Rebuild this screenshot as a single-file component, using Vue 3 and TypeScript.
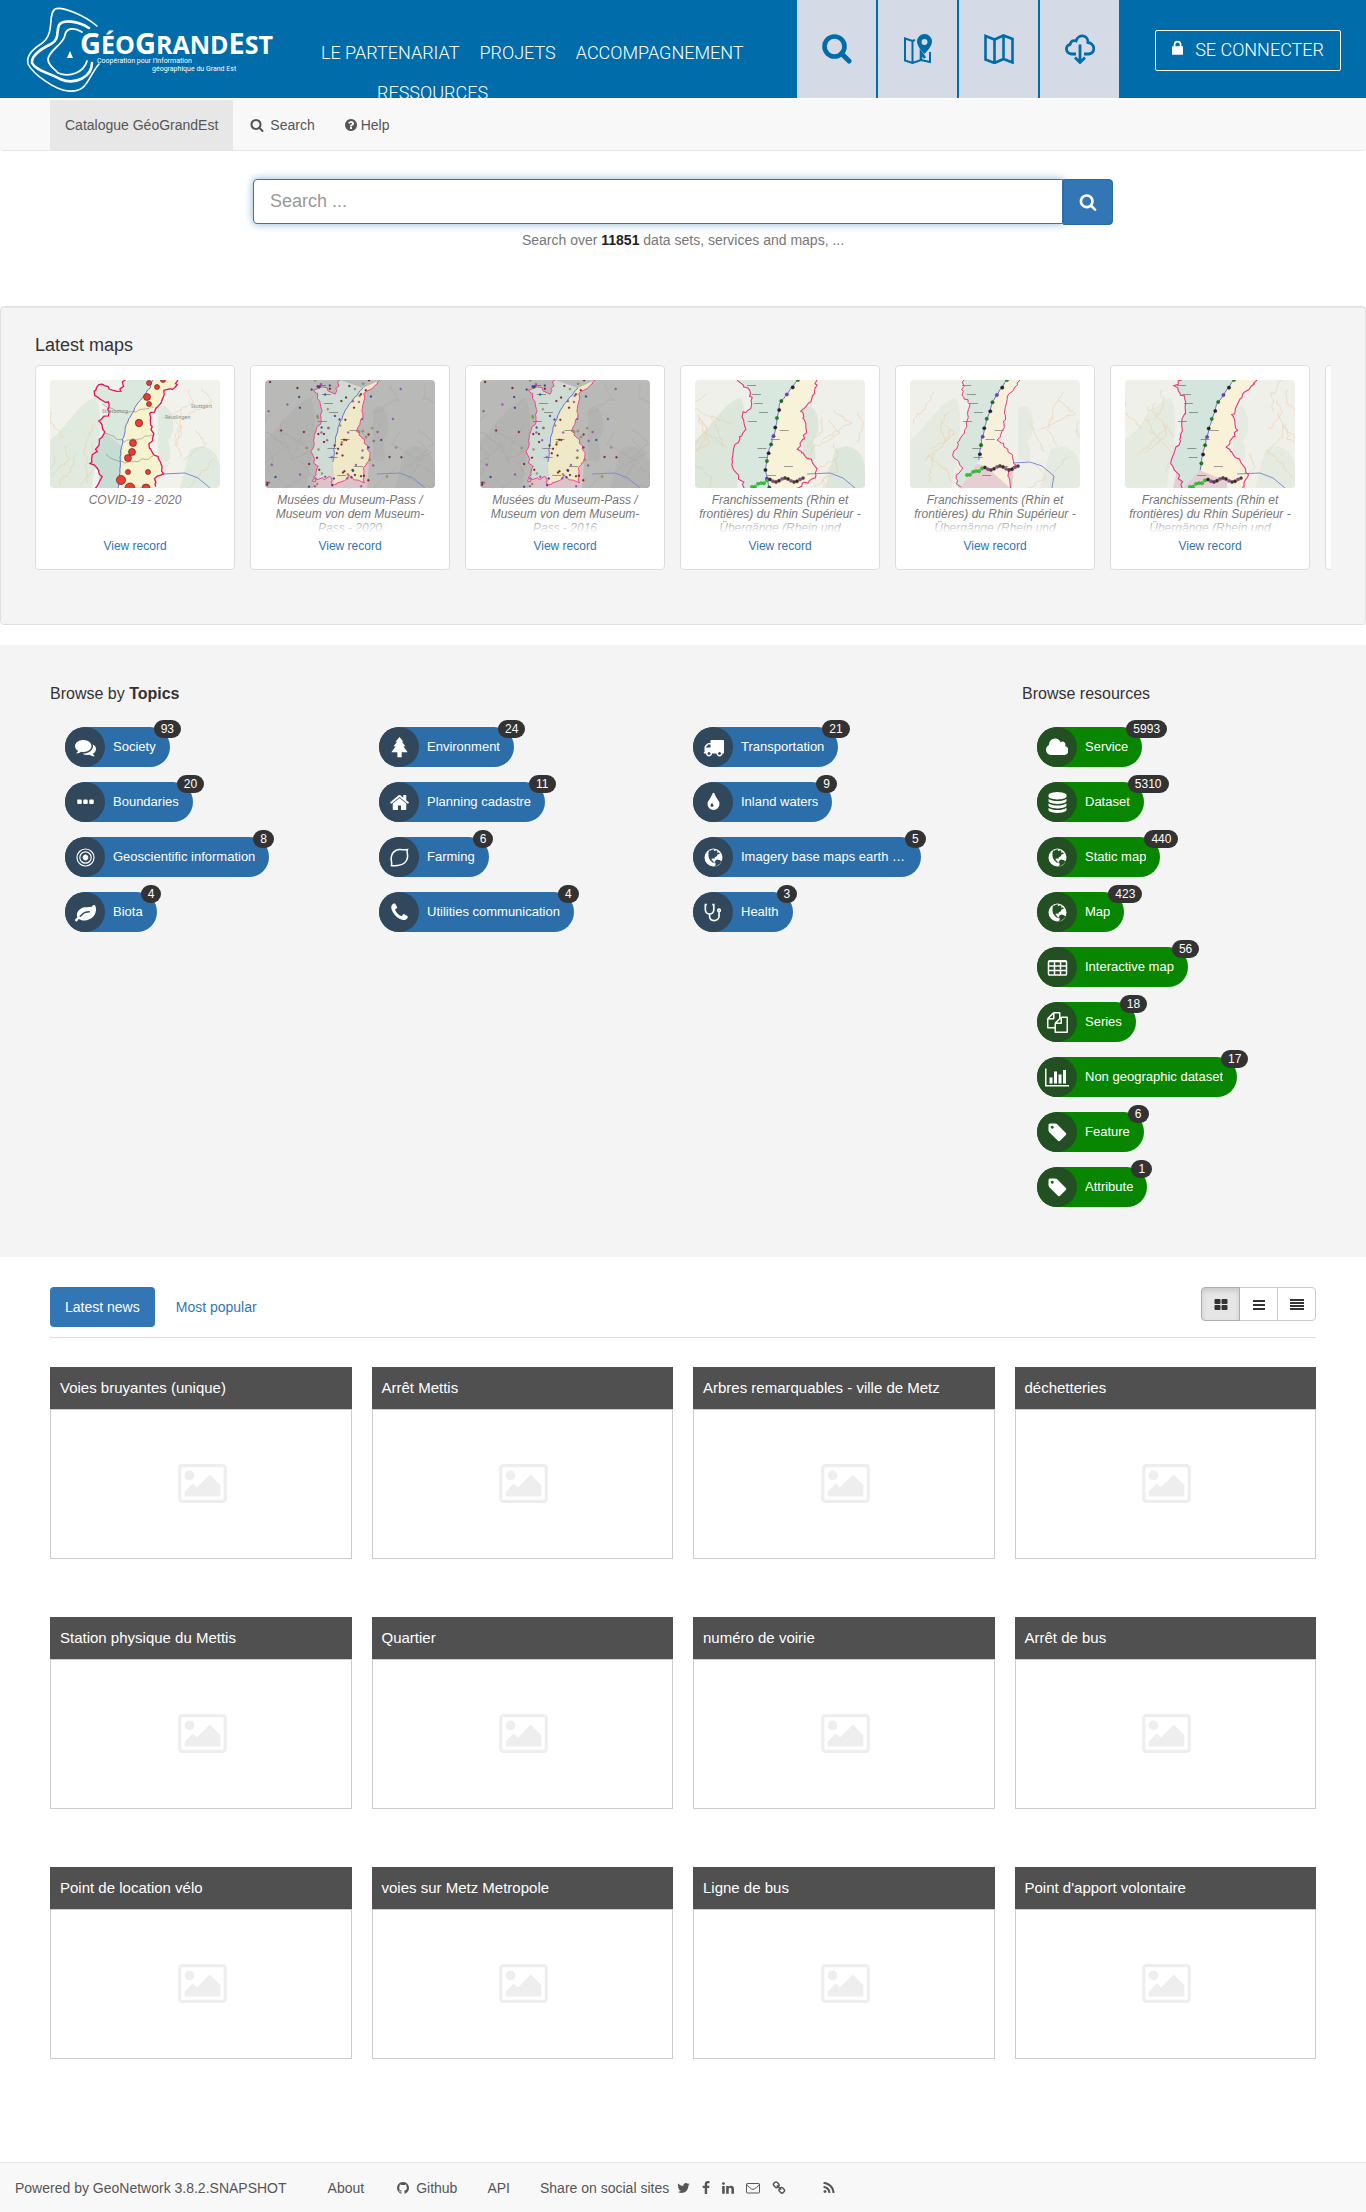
<script setup lang="ts">
import { ref } from 'vue'

interface Glyph { box: string; d: string; stroke?: number }
interface Pill { label: string; count: number; icon: string }
type Point = [number, number]
interface MapArt {
  left: Point[]
  right: Point[]
  river: Point[]
  bg: string
  land: string
  west: string
  east: string
  border: string
  bw: number
}
interface Dot { x: number; y: number; r: number; c: string }
interface MapCard { title: string; art: string }

const disc = 'M896 128a768 768 0 1 0 0 1536a768 768 0 1 0 0-1536z'
const cells = [448, 832, 1216]
  .map(y => [192, 704, 1216].map(x => `M${x} ${y}v256h384v-256z`).join(''))
  .join('')

const glyphs: Record<string, Glyph> = {
  search: { box: '0 0 1792 1792', d: 'M1216 832q0-185-131.5-316.5t-316.5-131.5-316.5 131.5-131.5 316.5 131.5 316.5 316.5 131.5 316.5-131.5 131.5-316.5zm512 832q0 52-38 90t-90 38q-54 0-90-38l-343-342q-179 124-399 124-143 0-273.5-55.5t-225-150-150-225-55.5-273.5 55.5-273.5 150-225 225-150 273.5-55.5 273.5 55.5 225 150 150 225 55.5 273.5q0 220-124 399l343 343q37 37 37 90z' },
  help: { box: '128 0 1536 1792', d: 'M1024 1376v-192q0-14-9-23t-23-9h-192q-14 0-23 9t-9 23v192q0 14 9 23t23 9h192q14 0 23-9t9-23zm256-672q0-88-55.5-163t-138.5-116-170-41q-243 0-371 213-15 24 8 42l132 100q7 6 19 6 16 0 25-12 53-68 86-92 34-24 86-24 48 0 85.5 26t37.5 59q0 38-20 61t-68 45q-63 28-115.5 86.5t-52.5 125.5v36q0 14 9 23t23 9h192q14 0 23-9t9-23q0-19 21.5-49.5t54.5-49.5q32-18 49-28.5t46-35 44.5-48 28-60.5 12.5-81zm384 192q0 209-103 385.5t-279.5 279.5-385.5 103-385.5-103-279.5-279.5-103-385.5 103-385.5 279.5-279.5 385.5-103 385.5 103 279.5 279.5 103 385.5z' },
  comments: { box: '0 0 1792 1792', d: 'M1408 768q0 139-94 257t-256.5 186.5-353.5 68.5q-86 0-176-16-124 88-278 128-36 9-86 16h-3q-11 0-20.5-8t-11.5-21q-1-3-1-6.5t.5-6.5 2-6l2.5-5 3.5-5.5 4-5 4.5-5 4-4.5q5-6 23-25t26-29.5 22.5-29 25-38.5 20.5-44q-124-72-195-177t-71-224q0-139 94-257t256.5-186.5 353.5-68.5 353.5 68.5 256.5 186.5 94 257zm384 256q0 120-71 224.5t-195 176.5q10 24 20.5 44t25 38.5 22.5 29 26 29.5 23 25q1 1 4 4.5t4.5 5 4 5 3.5 5.5l2.5 5 2 6 .5 6.5-1 6.5q-3 14-13 22t-22 7q-50-7-86-16-154-40-278-128-90 16-176 16-271 0-472-132 58 4 88 4 161 0 309-45t264-129q125-92 192-212t67-254q0-77-23-152 129 71 204 178t75 230z' },
  tree: { box: '0 0 1792 1792', d: 'M896 0L1230 400H1100L1400 790H1230L1590 1310H1080V1700Q1080 1728 1050 1728H740Q712 1728 712 1700V1310H200L560 790H390L690 400H560z' },
  dots: { box: '0 0 1792 1792', d: 'M224 640h256q96 0 96 96v192q0 96-96 96h-192q-96 0-96-96v-192q0-96 32-96zM800 640h192q96 0 96 96v192q0 96-96 96h-192q-96 0-96-96v-192q0-96 96-96zM1312 640h192q96 0 96 96v192q0 96-96 96h-192q-96 0-96-96v-192q0-96 96-96z' },
  home: { box: '0 0 1792 1792', d: 'M1472 992v480q0 26-19 45t-45 19h-384v-384h-256v384h-384q-26 0-45-19t-19-45v-480q0-1 .5-3t.5-3l575-474 575 474q1 2 1 6zm223-69l-62 74q-8 9-21 11h-3q-13 0-21-7l-692-577-692 577q-12 8-24 7-13-2-21-11l-62-74q-8-10-7-23.5t11-21.5l719-599q32-26 76-26t76 26l244 204v-195q0-14 9-23t23-9h192q14 0 23 9t9 23v408l219 182q10 8 11 21.5t-7 23.5z' },
  rings: { box: '0 0 1792 1792', stroke: 100, d: 'M896 170a726 726 0 1 0 0 1452a726 726 0 1 0 0-1452zM896 410a486 486 0 1 0 0 972a486 486 0 1 0 0-972zM896 700a196 196 0 1 0 0 392a196 196 0 1 0 0-392zM896 800a96 96 0 1 0 0 192a96 96 0 1 0 0-192zM896 860a36 36 0 1 0 0 72a36 36 0 1 0 0-72z' },
  lemon: { box: '0 0 1792 1792', stroke: 130, d: 'M1570 220C1280 290 1130 190 880 210C480 240 200 540 180 940C170 1180 290 1350 200 1580C340 1660 460 1570 740 1570C1240 1560 1560 1240 1590 820C1600 600 1500 430 1570 220z' },
  leaf: { box: '0 0 1792 1792', d: 'M1280 832q0-26-19-45t-45-19q-172 0-318 49.5t-259.5 134-235.5 219.5q-19 21-19 45 0 26 19 45t45 19q24 0 45-19 27-24 74-71t67-66q137-124 268.5-176t313.5-52q26 0 45-19t19-45zm512-198q0 95-20 193-46 224-184.5 383t-357.5 268q-214 108-438 108-148 0-286-47-15-5-88-42t-96-37q-16 0-39.5 32t-45 70-52.5 70-60 32q-43 0-63.5-17.5t-45.5-59.5q-2-4-6-11t-5.5-10-3-9.5-1.5-13.5q0-35 31-73.5t68-65.5 68-56 31-48q0-4-14-38t-16-44q-9-51-9-104 0-115 43.5-220t119-184.5 170.5-139 204-95.5q55-18 145-25.5t179.5-9 178.5-6 163.5-24 113.5-56.5l29.5-29.5 29.5-28 27-20 36.5-16 43.5-4.5q39 0 70.5 46t47.5 112 24 124 8 96z' },
  phone: { box: '0 0 1792 1792', d: 'M1600 1240q0 27-10 70.5t-21 68.5q-21 50-122 106-94 51-186 51-27 0-53-3.5t-57.5-12.5-47-14.5-55.5-20.5-49-18q-98-35-175-83-127-79-264-216t-216-264q-48-77-83-175-3-9-18-49t-20.5-55.5-14.5-47-12.5-57.5-3.5-53q0-92 51-186 56-101 106-122 25-11 68.5-21t70.5-10q14 0 21 3 18 6 53 76 11 19 30 54t35 63.5 31 53.5q3 4 17.5 25t21.5 35.5 7 28.5q0 20-28.5 50t-62 55-62 53-28.5 46q0 9 5 22.5t8.5 20.5 14 24 11.5 19q76 137 174 235t235 174q2 1 19 11.5t24 14 20.5 8.5 22.5 5q18 0 46-28.5t53-62 55-62 50-28.5q14 0 28.5 7t35.5 21.5 25 17.5q25 15 53.5 31t63.5 35 54 30q70 35 76 53 3 7 3 21z' },
  truck: { box: '0 0 1792 1792', d: 'M640 1408q0-52-38-90t-90-38-90 38-38 90 38 90 90 38 90-38 38-90zm-384-512h384v-256h-158q-13 0-22 9l-195 195q-9 9-9 22v30zm1280 512q0-52-38-90t-90-38-90 38-38 90 38 90 90 38 90-38 38-90zm256-1088v1024q0 15-4 26.5t-13.5 18.5-16.5 11.5-23.5 6-22.5 2-25.5 0-22.5-.5q0 106-75 181t-181 75-181-75-75-181h-384q0 106-75 181t-181 75-181-75-75-181h-64q-3 0-22.5.5t-25.5 0-22.5-2-23.5-6-16.5-11.5-13.5-18.5-4-26.5q0-26 19-45t45-19v-320q0-8-.5-35t0-38 2.5-34.5 6.5-37 14-30.5 22.5-30l198-198q19-19 50.5-32t58.5-13h160v-192q0-26 19-45t45-19h1024q26 0 45 19t19 45z' },
  drop: { box: '0 0 1792 1792', d: 'M896 1152q0-36-20-69-1-1-15.5-22.5t-25.5-38-25-44-21-50.5q-4-16-21-16t-21 16q-7 23-21 50.5t-25 44-25.5 38-15.5 22.5q-20 33-20 69 0 53 37.5 90.5t90.5 37.5 90.5-37.5 37.5-90.5zm512-128q0 212-150 362t-362 150-362-150-150-362q0-145 81-275 6-9 62.5-90.5t101-151 99.5-178 83-201.5q9-30 34-47t51-17 51.5 17 33.5 47q28 93 83 201.5t99.5 178 101 151 62.5 90.5q81 127 81 275z' },
  globe: { box: '0 0 1792 1792', d: disc + 'M500 290l120 20 100-80 250-30-60 110 70 30 150-60 110 70-60 130 190-30 60 120-190 70-60 140-170 100-30 130-120-30-130 20 20 130 100 40 60 130 130 60-60 30-190-90-160-150-120-190-50-260zM1090 1130l130-60 180 40 180 110-60 150-180 180-200 90-130 10 70-130-20-160-60-90z' },
  stetho: { box: '0 0 1792 1792', stroke: 140, d: 'M330 220H200V640C200 890 380 1020 560 1020S920 890 920 640V220H790M560 1020V1200C560 1450 740 1590 950 1590S1370 1450 1370 1200V820M1370 600a110 110 0 1 0 1 0z' },
  cloud: { box: '0 0 1920 1792', d: 'M1920 1152q0 159-112.5 271.5t-271.5 112.5h-1088q-185 0-316.5-131.5t-131.5-316.5q0-132 71-241.5t187-163.5q-2-28-2-43 0-212 150-362t362-150q158 0 286.5 88t187.5 230q70-62 166-62 106 0 181 75t75 181q0 75-41 138 129 30 213 134.5t84 239.5z' },
  database: { box: '0 0 1792 1792', d: 'M896 768q237 0 443-43t325-127v170q0 69-103 128t-280 93.5-385 34.5-385-34.5-280-93.5-103-128v-170q119 84 325 127t443 43zm0 768q237 0 443-43t325-127v170q0 69-103 128t-280 93.5-385 34.5-385-34.5-280-93.5-103-128v-170q119 84 325 127t443 43zm0-384q237 0 443-43t325-127v170q0 69-103 128t-280 93.5-385 34.5-385-34.5-280-93.5-103-128v-170q119 84 325 127t443 43zm0-1152q208 0 385 34.5t280 93.5 103 128v128q0 69-103 128t-280 93.5-385 34.5-385-34.5-280-93.5-103-128v-128q0-69 103-128t280-93.5 385-34.5z' },
  table: { box: '0 0 1792 1792', d: 'M224 256h1344q160 0 160 160v1024q0 160-160 160h-1344q-160 0-160-160v-1024q0-160 160-160z' + cells },
  files: { box: '0 0 1792 1792', d: 'M1696 384q40 0 68 28t28 68v1216q0 40-28 68t-68 28h-960q-40 0-68-28t-28-68v-288h-544q-40 0-68-28t-28-68v-672q0-40 20-88t48-76l408-408q28-28 76-48t88-20h416q40 0 68 28t28 68v328q68-40 128-40h416zm-544 213l-299 299h299v-299zm-640-384l-299 299h299v-299zm196 647l316-316v-416h-384v416q0 40-28 68t-68 28h-416v640h512v-256q0-40 20-88t48-76zm956 804v-1152h-384v416q0 40-28 68t-68 28h-416v640h896z' },
  chart: { box: '0 0 2048 1792', d: 'M640 896v512h-256v-512h256zm384-512v1024h-256v-1024h256zm1024 1152v128h-2048v-1536h128v1408h1920zm-640-896v768h-256v-768h256zm384-384v1152h-256v-1152h256z' },
  tag: { box: '0 0 1792 1792', d: 'M576 448q0-53-37.5-90.5t-90.5-37.5-90.5 37.5-37.5 90.5 37.5 90.5 90.5 37.5 90.5-37.5 37.5-90.5zm1067 576q0 53-37 90l-491 492q-39 37-91 37-53 0-90-37l-715-716q-38-37-64.5-101t-26.5-117v-416q0-52 38-90t90-38h416q53 0 117 26.5t102 64.5l715 714q37 39 37 91z' },
  picture: { box: '0 128 1920 1536', d: 'M640 576q0 80-56 136t-136 56-136-56-56-136 56-136 136-56 136 56 56 136zm1024 384v448h-1408v-192l320-320 160 160 512-512zm96-704h-1600q-13 0-22.5 9.5t-9.5 22.5v1216q0 13 9.5 22.5t22.5 9.5h1600q13 0 22.5-9.5t9.5-22.5v-1216q0-13-9.5-22.5t-22.5-9.5zm160 32v1216q0 66-47 113t-113 47h-1600q-66 0-113-47t-47-113v-1216q0-66 47-113t113-47h1600q66 0 113 47t47 113z' },
  github: { box: '128 0 1536 1792', d: 'M896 128q209 0 385.5 103t279.5 279.5 103 385.5q0 251-146.5 451.5t-378.5 277.5q-27 5-40-7t-13-30q0-3 .5-76.5t.5-134.5q0-97-52-142 57-6 102.5-18t94-39 81-66.5 53-105 20.5-150.5q0-119-79-206 37-91-8-204-28-9-81 11t-92 44l-38 24q-93-26-192-26t-192 26q-16-11-42.5-27t-83.5-38.5-85-13.5q-45 113-8 204-79 87-79 206 0 85 20.5 150t52.5 105 80.5 67 94 39 102.5 18q-39 36-49 103-21 10-45 15t-57 5-65.5-21.5-55.5-62.5q-19-32-48.5-52t-49.5-24l-20-3q-21 0-29 4.5t-5 11.5 9 14 13 12l7 5q22 10 43.5 38t31.5 51l10 23q13 38 44 61.5t67 30 69.5 7 55.5-3.5l23-4q0 38 .5 88.5t.5 54.5q0 18-13 30t-40 7q-232-77-378.5-277.5t-146.5-451.5q0-209 103-385.5t279.5-279.5 385.5-103z' },
  twitter: { box: '64 0 1664 1792', d: 'M1684 408q-67 98-162 167 1 14 1 42 0 130-38 259.5t-115.5 248.5-184.5 210.5-258 146-323 54.5q-271 0-496-145 35 4 78 4 225 0 401-138-105-2-188-64.5t-114-159.5q33 5 61 5 43 0 85-11-112-23-185.5-111.5t-73.5-205.5v-4q68 38 146 41-66-44-105-115t-39-154q0-88 44-163 121 149 294.5 238.5t371.5 99.5q-8-38-8-74 0-134 94.5-228.5t228.5-94.5q140 0 236 102 109-21 205-78-37 115-142 178 93-10 186-50z' },
  facebook: { box: '384 0 1024 1792', d: 'M1343 12v264h-157q-86 0-116 36t-30 108v189h293l-39 296h-254v759h-306v-759h-255v-296h255v-218q0-186 104-288.5t277-102.5q147 0 228 12z' },
  linkedin: { box: '128 0 1536 1792', d: 'M477 625v991h-330v-991h330zm21-306q1 73-50.5 122t-135.5 49h-2q-82 0-132-49t-50-122q0-74 51.5-122.5t134.5-48.5 133 48.5 51 122.5zm1166 729v568h-329v-530q0-105-40.5-164.5t-126.5-59.5q-63 0-105.5 34.5t-63.5 85.5q-11 30-11 81v553h-329q2-399 2-647t-1-296l-1-48h329v144h-2q20-32 41-56t56.5-52 87-43.5 114.5-15.5q171 0 275 113.5t104 332.5z' },
  mail: { box: '0 0 1792 1792', stroke: 128, d: 'M160 320H1632Q1728 320 1728 416V1440Q1728 1536 1632 1536H160Q64 1536 64 1440V416Q64 320 160 320zM90 420Q160 620 420 800L720 1020Q896 1130 1072 1020L1372 800Q1640 620 1700 420' },
  link: { box: '0 0 1792 1792', d: 'M1520 1216q0-40-28-68l-208-208q-28-28-68-28-42 0-72 32 3 3 19 18.5t21.5 21.5 15 19 13 25.5 3.5 27.5q0 40-28 68t-68 28q-15 0-27.5-3.5t-25.5-13-19-15-21.5-21.5-18.5-19q-33 31-33 73 0 40 28 68l206 207q27 27 68 27 40 0 68-26l147-146q28-28 28-67zm-703-705q0-40-28-68l-206-207q-28-28-68-28-39 0-68 27l-147 146q-28 28-28 67 0 40 28 68l208 208q27 27 68 27 42 0 72-31-3-3-19-18.5t-21.5-21.5-15-19-13-25.5-3.5-27.5q0-40 28-68t68-28q15 0 27.5 3.5t25.5 13 19 15 21.5 21.5 18.5 19q33-31 33-73zm895 705q0 120-85 203l-147 146q-83 83-203 83-121 0-204-85l-206-207q-83-83-83-203 0-123 88-209l-88-88q-86 88-208 88-120 0-204-84l-208-208q-84-84-84-204t85-203l147-146q83-83 203-83 121 0 204 85l206 207q83 83 83 203 0 123-88 209l88 88q86-88 208-88 120 0 204 84l208 208q84 84 84 204z' },
  rss: { box: '128 0 1536 1792', d: 'M576 1344q0 80-56 136t-136 56-136-56-56-136 56-136 136-56 136 56 56 136zm512 123q2 28-17 48-18 21-47 21h-135q-25 0-43-16.5t-20-41.5q-22-229-184.5-391.5t-391.5-184.5q-25-2-41.5-20t-16.5-43v-135q0-29 21-47 17-17 43-17h5q160 13 306 80.5t259 181.5q114 113 181.5 259t80.5 306zm512 2q2 27-18 47-18 20-46 20h-143q-26 0-44.5-17.5t-19.5-42.5q-12-215-101-408.5t-231.5-336-336-231.5-408.5-102q-25-1-42.5-19.5t-17.5-43.5v-143q0-28 20-46 18-18 44-18h3q262 13 501.5 120t425.5 294q187 186 294 425.5t120 501.5z' },
  grid: { box: '0 0 14 14', d: 'M1.5 2h4q1 0 1 1v3q0 1-1 1h-4q-1 0-1-1v-3q0-1 1-1zM8.500 2h4q1 0 1 1v3q0 1-1 1h-4q-1 0-1-1v-3q0-1 1-1zM1.500 8h4q1 0 1 1v3q0 1-1 1h-4q-1 0-1-1v-3q0-1 1-1zM8.500 8h4q1 0 1 1v3q0 1-1 1h-4q-1 0-1-1v-3q0-1 1-1z' },
  bars: { box: '0 0 14 14', d: 'M1 3h12v2h-12zM1 7h12v2h-12zM1 11h12v2h-12z' },
  justify: { box: '0 0 14 14', d: 'M0 2h14v2h-14zM0 5h14v2h-14zM0 8h14v2h-14zM0 11h14v2h-14z' }
}

const mainNav = ['Le partenariat', 'Projets', 'Accompagnement']
const socials = ['twitter', 'facebook', 'linkedin', 'mail', 'link']

const topics: Pill[] = [
  { label: 'Society', count: 93, icon: 'comments' },
  { label: 'Environment', count: 24, icon: 'tree' },
  { label: 'Transportation', count: 21, icon: 'truck' },
  { label: 'Boundaries', count: 20, icon: 'dots' },
  { label: 'Planning cadastre', count: 11, icon: 'home' },
  { label: 'Inland waters', count: 9, icon: 'drop' },
  { label: 'Geoscientific information', count: 8, icon: 'rings' },
  { label: 'Farming', count: 6, icon: 'lemon' },
  { label: 'Imagery base maps earth cover', count: 5, icon: 'globe' },
  { label: 'Biota', count: 4, icon: 'leaf' },
  { label: 'Utilities communication', count: 4, icon: 'phone' },
  { label: 'Health', count: 3, icon: 'stetho' }
]

const resources: Pill[] = [
  { label: 'Service', count: 5993, icon: 'cloud' },
  { label: 'Dataset', count: 5310, icon: 'database' },
  { label: 'Static map', count: 440, icon: 'globe' },
  { label: 'Map', count: 423, icon: 'globe' },
  { label: 'Interactive map', count: 56, icon: 'table' },
  { label: 'Series', count: 18, icon: 'files' },
  { label: 'Non geographic dataset', count: 17, icon: 'chart' },
  { label: 'Feature', count: 6, icon: 'tag' },
  { label: 'Attribute', count: 1, icon: 'tag' }
]

const news = [
  'Voies bruyantes (unique)', 'Arrêt Mettis', 'Arbres remarquables - ville de Metz', 'déchetteries',
  'Station physique du Mettis', 'Quartier', 'numéro de voirie', 'Arrêt de bus',
  'Point de location vélo', 'voies sur Metz Metropole', 'Ligne de bus', 'Point d\'apport volontaire'
]

const crossings = 'Franchissements (Rhin et frontières) du Rhin Supérieur - Übergänge (Rhein und'
const maps: MapCard[] = [
  { title: 'COVID-19 - 2020', art: 'covid' },
  { title: 'Musées du Museum-Pass / Museum von dem Museum-Pass - 2020', art: 'museum' },
  { title: 'Musées du Museum-Pass / Museum von dem Museum-Pass - 2016', art: 'museum' },
  { title: crossings, art: 'rhineA' },
  { title: crossings, art: 'rhineB' },
  { title: crossings, art: 'rhineC' },
  { title: '', art: 'rhineC' }
]

const arts: Record<string, MapArt> = {
  covid: {
    left: [[75, 0], [70, 11], [57, 8], [50, 4], [44, 12], [52, 20], [60, 24], [58, 36], [50, 40], [54, 52], [47, 68], [40, 84], [50, 92], [52, 98], [45, 108]],
    right: [[128, 0], [125, 8], [115, 12], [112, 22], [100, 35], [103, 58], [98, 65], [110, 82], [114, 94], [106, 98], [106, 108]],
    river: [[103, 0], [100, 8], [85, 28], [76, 45], [71, 68], [70, 86], [68, 108]],
    bg: '#f0f2ec', land: '#e0eadf', west: '#dbe9dc', east: '#f8f3cf', border: '#e3125e', bw: 1.3
  },
  museum: {
    left: [[75, 0], [70, 13], [58, 8], [50, 9], [55, 20], [57, 40], [50, 55], [47, 72], [50, 82], [53, 90], [46, 102], [66, 97], [68, 106]],
    right: [[115, 0], [110, 6], [100, 15], [97, 40], [92, 50], [103, 68], [106, 78], [98, 88], [100, 103], [84, 96], [68, 106]],
    river: [[98, 8], [84, 25], [75, 42], [70, 60], [68, 82]],
    bg: '#babab8', land: '#b3b4b2', west: '#cfdcd5', east: '#efe9c8', border: '#f0468a', bw: 1
  },
  rhineA: {
    left: [[42, 0], [55, 10], [57, 28], [48, 33], [50, 50], [40, 68], [36, 85], [45, 98], [50, 108]],
    right: [[122, 0], [118, 20], [107, 30], [112, 50], [103, 68], [115, 80], [122, 90], [121, 98], [100, 108]],
    river: [[103, 0], [85, 24], [80, 50], [74, 70], [70, 90], [74, 108]],
    bg: '#eef0e9', land: '#dce7da', west: '#d9e8de', east: '#f8f3d8', border: '#e6387a', bw: 1.1
  },
  rhineB: {
    left: [[54, 0], [52, 14], [60, 26], [57, 45], [50, 60], [44, 75], [52, 88], [46, 98], [50, 108]],
    right: [[110, 0], [97, 20], [94, 48], [88, 60], [103, 75], [105, 86], [98, 90], [102, 108]],
    river: [[97, 0], [84, 20], [76, 42], [71, 62], [69, 80]],
    bg: '#f0f0eb', land: '#e5ebe0', west: '#d9e6dd', east: '#f7f0db', border: '#e6387a', bw: 1
  },
  rhineC: {
    left: [[57, 0], [50, 5], [60, 20], [62, 30], [57, 40], [56, 60], [45, 84], [54, 95], [58, 108]],
    right: [[132, 0], [115, 20], [108, 35], [112, 50], [102, 66], [115, 82], [124, 95], [118, 108]],
    river: [[109, 0], [92, 25], [84, 48], [79, 68], [75, 90]],
    bg: '#eff0ea', land: '#e6ece1', west: '#d3e5dc', east: '#faf2d8', border: '#e6387a', bw: 1.1
  }
}

/** Deterministic pseudo random numbers so that each map keeps its look. */
function seeded(seed: number): () => number {
  let s = seed
  return () => {
    s = (s * 16807) % 2147483647
    return s / 2147483647
  }
}

/** Subdivides a line and roughens it like a surveyed border. */
function rough(points: Point[], amount: number, seed: number): Point[] {
  const rnd = seeded(seed)
  const out: Point[] = [points[0]]
  for (let i = 1; i < points.length; i++) {
    const [ax, ay] = points[i - 1]
    const [bx, by] = points[i]
    const steps = Math.max(2, Math.round(Math.hypot(bx - ax, by - ay) / 3))
    for (let k = 1; k <= steps; k++) {
      const t = k / steps
      out.push([
        ax + (bx - ax) * t + (rnd() - 0.5) * amount,
        ay + (by - ay) * t + (rnd() - 0.5) * amount
      ])
    }
  }
  return out
}

function text(points: Point[]): string {
  return points.map(p => p[0].toFixed(1) + ',' + p[1].toFixed(1)).join(' ')
}

function scatter(count: number, seed: number, colors: string[], r: number, x0: number, w: number): Dot[] {
  const rnd = seeded(seed)
  return Array.from({ length: count }, () => ({
    x: x0 + rnd() * w, y: rnd() * 108, r, c: colors[Math.floor(rnd() * colors.length)]
  }))
}

function dotsFor(name: string): Dot[] {
  if (name === 'covid') {
    return [[99, 3, 2.5], [107, 7, 2.5], [113, 0, 2.5], [97, 17, 3.5], [99, 24, 2.5], [89, 43, 3.7], [83, 63, 3.5], [82, 72, 3.5], [78, 78, 3.5], [78, 92, 2.5], [98, 92, 2.5], [71, 100, 4.6], [80, 108, 5], [96, 108, 4]]
      .map(([x, y, r]) => ({ x, y, r, c: '#f23b2f' }))
  }
  if (name === 'museum') {
    const colors = ['#8c1c24', '#3148c0', '#a02020', '#a9b02e', '#8f1f2a', '#b05ad0']
    return scatter(45, 91, colors, 1, 2, 150).concat(scatter(65, 517, colors, 1, 50, 54))
  }
  const art = arts[name]
  const line = rough(art.river, 1, 3)
  const colors = ['#128a1c', '#1c2a1c', '#6a3fc0', '#0c7a18', '#2c1f2c']
  const along = line
    .filter((_, i) => i % 3 === 0)
    .map(([x, y], i) => ({ x, y, r: 1.8, c: colors[i % colors.length] }))
  const end = name === 'rhineB' ? 88 : 100
  const foot: Dot[] = Array.from({ length: 18 }, (_, i) => ({
    x: art.left[art.left.length - 1][0] + 7 + i * 3,
    y: i < 6 ? end + 7 - i * 1.2 + Math.sin(i * 2) : end + Math.sin(i) * 2,
    r: 1.7,
    c: i < 6 ? '#14d82a' : ['#3b2a1c', '#8a4aa8', '#4a4030'][i % 3]
  }))
  return along.concat(foot)
}

function roads(name: string): string[] {
  const rnd = seeded(name.length * 131 + name.charCodeAt(name.length - 1))
  return Array.from({ length: 16 }, (_, i) => {
    const x = i % 2 ? 120 + rnd() * 50 : rnd() * 50
    const y = rnd() * 90
    return text(rough([[x, y], [x + 18 - rnd() * 36, y + 14], [x + 30 - rnd() * 60, y + 30]], 3, i + 5))
  })
}

interface Drawn {
  art: MapArt
  west: string
  east: string
  left: string
  right: string
  river: string
  dots: Dot[]
  roads: string[]
  splits: string[]
  labels: Point[]
  sea: string
  town: boolean
}

function draw(name: string): Drawn {
  const art = arts[name]
  const left = rough(art.left, 3, 17)
  const right = rough(art.right, 3, 29)
  const river = rough(art.river, 1.2, 3)
  const back = [...river].reverse()
  const cuts = [30, 58, 80]
  const rnd = seeded(77)
  return {
    art,
    west: text([...left, ...back]),
    east: text([...right, ...back]),
    left: text(left),
    right: text(right),
    river: text(river),
    dots: dotsFor(name),
    roads: roads(name),
    splits: cuts.map((y, i) => text(rough([[52 + i * 2, y - 6], [75, y + 4], [104, y - 3]], 2.5, i + 2))),
    labels: Array.from({ length: 11 }, (_, i): Point => [52 + rnd() * 38, 5 + i * 9]),
    sea: name === 'rhineB' ? '103,83 120,82 132,86 144,96 142,108' : '112,94 135,93 148,98 160,108',
    town: name === 'covid'
  }
}

const drawings: Record<string, Drawn> = Object.fromEntries(Object.keys(arts).map(k => [k, draw(k)]))

const query = ref('')
const tab = ref<'latest' | 'popular'>('latest')
const view = ref('grid')
const views = [
  { id: 'grid', label: 'Grid view' },
  { id: 'bars', label: 'List view' },
  { id: 'justify', label: 'Compact view' }
]
</script>

<template>
  <div class="page">
    <header class="top">
      <a class="logo" href="#" aria-label="GéoGrandEst">
        <svg viewBox="0 0 280 98" width="280" height="98">
          <g fill="none" stroke="#fff" stroke-linecap="round">
            <path stroke-width="1.6" d="M97 26C84 15 62 6 55 9C47 15 56 34 41 44C33 49 26 56 28 64C33 74 55 90 68 91C88 93 87 78 99 64" />
            <path stroke-width="2.6" d="M89 28C78 21 63 19 59 25C56 32 60 39 51 44C41 49 31 55 32 63C36 71 50 73 60 79C76 86 92 76 92 63" />
            <path stroke-width="1.8" d="M82 32C74 27 66 28 65 35C64 44 49 50 48 59C48 66 54 68 58 73C70 78 84 72 87 61" />
          </g>
          <path fill="#fff" d="M70 51l3 7h-6z" />
          <text class="brand" x="80" y="54">G<tspan class="cap">ÉO</tspan>G<tspan class="cap">RAND</tspan>E<tspan class="cap">ST</tspan></text>
          <text class="motto" x="97" y="63">Coopération pour l'information</text>
          <text class="motto" x="152" y="71">géographique du Grand Est</text>
        </svg>
      </a>
      <nav class="main-nav">
        <a v-for="item in mainNav" :key="item" href="#">{{ item }}</a>
        <a class="last" href="#">Ressources</a>
      </nav>
      <div class="tools">
        <a href="#" aria-label="Search">
          <svg viewBox="0 0 30 30"><circle cx="12.500" cy="12.500" r="10" fill="none" stroke="currentColor" stroke-width="4.600" /><path d="M19.500 19.500l7.500 7.500" stroke="currentColor" stroke-width="5" stroke-linecap="round" /></svg>
        </a>
        <a href="#" aria-label="Points of interest">
          <svg viewBox="0 0 30 30" fill="none" stroke="currentColor" stroke-width="2">
            <path d="M12 6L9.500 7 2 4.500V26.500L9.500 29 18 26 27 28V18M9.500 7V29" />
            <path d="M18 26V18.500L22 24" stroke-width="2.600" />
            <path fill="currentColor" stroke="none" fill-rule="evenodd" d="M21.500 0a7.500 7.500 0 0 1 7.500 7.500c0 4.500-4.500 9-7.500 12.500c-3-3.500-7.500-8-7.500-12.500a7.500 7.500 0 0 1 7.500-7.500zM21.500 5a3 3 0 1 0 0 6a3 3 0 1 0 0-6z" />
          </svg>
        </a>
        <a href="#" aria-label="Maps">
          <svg viewBox="0 0 30 30" fill="none" stroke="currentColor" stroke-width="2.600"><path d="M1.500 2L10.500 5.500 19.500 1.500 28.500 5V28.500L19.500 25 10.500 29 1.500 25.500zM10.500 5.500V29M19.500 1.500V25" /></svg>
        </a>
        <a href="#" aria-label="Download">
          <svg viewBox="0 0 30 30" fill="none" stroke="currentColor" stroke-width="2.800"><path d="M11 20H6.500C-.5 19 .5 11 5 10.500C6 7 8 6 11 7C13 0 23 0 23 8.500C30 9 31 19 24 20H19M15 10.500V28M10 23.500L15 28.500L20 23.500" /></svg>
        </a>
      </div>
      <div class="account">
        <a href="#" class="login">
          <svg viewBox="0 0 13 18" width="13" height="18"><rect y="7" width="13" height="10" rx="1" fill="#fff" /><path d="M3 8V5a3.500 3.500 0 0 1 7 0V8" fill="none" stroke="#fff" stroke-width="2" /></svg>
          <span>SE CONNECTER</span>
        </a>
      </div>
    </header>

    <nav class="bar">
      <a href="#" class="active">Catalogue GéoGrandEst</a>
      <a href="#"><svg class="fa wide" :viewBox="glyphs.search.box"><path :d="glyphs.search.d" /></svg>Search</a>
      <a href="#"><svg class="fa" :viewBox="glyphs.help.box"><path :d="glyphs.help.d" /></svg>Help</a>
    </nav>

    <section class="finder">
      <form class="query" @submit.prevent>
        <input v-model="query" type="text" placeholder="Search ..." aria-label="Search" />
        <button type="submit" aria-label="Search"><svg :viewBox="glyphs.search.box" width="18" height="18"><path :d="glyphs.search.d" /></svg></button>
      </form>
      <p>Search over <strong>11851</strong> data sets, services and maps, ...</p>
    </section>

    <section class="latest">
      <h2>Latest maps</h2>
      <div class="strip">
        <article v-for="(map, i) in maps" :key="i" class="map">
          <svg class="thumb" viewBox="0 0 170 108" preserveAspectRatio="xMidYMid slice" aria-hidden="true">
            <rect width="170" height="108" :fill="drawings[map.art].art.bg" />
            <g :fill="drawings[map.art].art.land">
              <path d="M0 60C15 50 30 20 46 18C56 40 45 80 42 108H0z" />
              <path d="M108 30C120 14 130 50 118 60C125 90 115 80 108 80z" />
              <path d="M140 70C155 60 170 72 170 90V108H130z" />
            </g>
            <g fill="none" :stroke="map.art === 'museum' ? '#a4a4a4' : '#ecc79a'" stroke-width="0.6" opacity="0.8">
              <polyline v-for="(r, k) in drawings[map.art].roads" :key="k" :points="r" />
            </g>
            <path v-if="map.art !== 'rhineA'" d="M52 90L66 84 90 88 104 84 102 108H48z" fill="#e4c6cc" opacity="0.8" />
            <polygon :points="drawings[map.art].west" :fill="drawings[map.art].art.west" />
            <polygon :points="drawings[map.art].east" :fill="drawings[map.art].art.east" />
            <path v-if="drawings[map.art].town" d="M54 52L72 66 70 96 68 108H48L50 92 40 84z" fill="#c5ddd3" />
            <g v-if="drawings[map.art].town" fill="none" stroke="#747468" stroke-width="0.5">
              <polyline v-for="(s, k) in drawings[map.art].splits" :key="k" :points="s" />
            </g>
            <g v-else fill="#444">
              <rect v-for="(l, k) in drawings[map.art].labels" :key="k" :x="l[0]" :y="l[1]" width="9" height="1" opacity="0.5" />
            </g>
            <polyline :points="drawings[map.art].river" fill="none" stroke="#5a66d0" stroke-width="0.9" />
            <polyline :points="drawings[map.art].sea" fill="none" stroke="#7d8cd8" stroke-width="1" />
            <polyline :points="drawings[map.art].left" fill="none" :stroke="drawings[map.art].art.border" :stroke-width="drawings[map.art].art.bw" />
            <polyline :points="drawings[map.art].right" fill="none" :stroke="drawings[map.art].art.border" :stroke-width="drawings[map.art].art.bw" />
            <circle v-for="(d, k) in drawings[map.art].dots" :key="k" :cx="d.x" :cy="d.y" :r="d.r" :fill="d.c" stroke="#3a2020" :stroke-width="drawings[map.art].town ? 0.6 : 0.2" />
            <g v-if="drawings[map.art].town" class="places">
              <text x="141" y="28">Stuttgart</text>
              <text x="115" y="39">Reutlingen</text>
              <text x="52" y="33">Strasbourg</text>
            </g>
          </svg>
          <p class="caption">{{ map.title }}</p>
          <a href="#">View record</a>
        </article>
      </div>
    </section>

    <section class="browse">
      <div class="topics">
        <h3>Browse by <strong>Topics</strong></h3>
        <div class="topic-grid">
          <div v-for="pill in topics" :key="pill.label" class="cell">
            <a href="#" class="pill">
              <span class="round"><svg :viewBox="glyphs[pill.icon].box" :class="{ line: glyphs[pill.icon].stroke }"><path :d="glyphs[pill.icon].d" :stroke-width="glyphs[pill.icon].stroke" fill-rule="evenodd" /></svg></span>
              <span class="name">{{ pill.label }}</span>
              <span class="count">{{ pill.count }}</span>
            </a>
          </div>
        </div>
      </div>
      <div class="resources">
        <h3>Browse resources</h3>
        <div class="resource-list">
          <div v-for="pill in resources" :key="pill.label" class="cell">
            <a href="#" class="pill green">
              <span class="round"><svg :viewBox="glyphs[pill.icon].box"><path :d="glyphs[pill.icon].d" fill-rule="evenodd" /></svg></span>
              <span class="name">{{ pill.label }}</span>
              <span class="count">{{ pill.count }}</span>
            </a>
          </div>
        </div>
      </div>
    </section>

    <section class="news">
      <div class="news-head">
        <div class="tabs">
          <button type="button" :class="{ on: tab === 'latest' }" @click="tab = 'latest'">Latest news</button>
          <button type="button" :class="{ on: tab === 'popular' }" @click="tab = 'popular'">Most popular</button>
        </div>
        <div class="views">
          <button v-for="v in views" :key="v.id" type="button" :aria-label="v.label" :class="{ on: view === v.id }" @click="view = v.id">
            <svg :viewBox="glyphs[v.id].box" width="14" height="14"><path :d="glyphs[v.id].d" /></svg>
          </button>
        </div>
      </div>
      <div class="cards">
        <article v-for="title in news" :key="title" class="card">
          <h4>{{ title }}</h4>
          <div class="blank"><svg :viewBox="glyphs.picture.box" width="49" height="39"><path :d="glyphs.picture.d" /></svg></div>
        </article>
      </div>
    </section>

    <footer class="foot">
      <span class="powered">Powered by GeoNetwork 3.8.2.SNAPSHOT</span>
      <a href="#">About</a>
      <a href="#"><svg class="fa wide" :viewBox="glyphs.github.box"><path :d="glyphs.github.d" /></svg>Github</a>
      <a href="#">API</a>
      <span class="share">Share on social sites
        <a v-for="s in socials" :key="s" href="#" :aria-label="s"><svg :class="{ line: glyphs[s].stroke }" :viewBox="glyphs[s].box" height="14"><path :d="glyphs[s].d" :stroke-width="glyphs[s].stroke" /></svg></a>
      </span>
      <a href="#" class="rss" aria-label="RSS feed"><svg :viewBox="glyphs.rss.box" height="14"><path :d="glyphs.rss.d" /></svg></a>
    </footer>
  </div>
</template>

<style>
body {
  margin: 0;
  background: #fff;
}
</style>

<style scoped>
.page {
  font: 14px/20px "Liberation Sans", Arial, sans-serif;
  color: #333;
}
.page *,
.page *::before {
  box-sizing: border-box;
}
a {
  color: inherit;
  text-decoration: none;
}
h2, h3, h4, p {
  margin: 0;
  font-weight: 400;
}
button {
  font: inherit;
  cursor: pointer;
}
svg {
  display: block;
  fill: currentColor;
}
.line {
  fill: none;
  stroke: currentColor;
}

.top {
  display: flex;
  height: 98px;
  overflow: hidden;
  background: #006ca9;
  color: #fff;
}
.logo {
  flex: none;
}
.logo text {
  fill: #fff;
  font-family: "Open Sans", sans-serif;
}
.logo .brand {
  font-size: 29px;
  font-weight: 700;
}
.logo .cap {
  font-size: 25px;
}
.logo .motto {
  font-family: Roboto, sans-serif;
  font-size: 7px;
}
.main-nav {
  display: flex;
  flex: 1;
  flex-wrap: wrap;
  align-content: flex-start;
  gap: 0 20px;
  padding: 33px 32px 0 41px;
  font: 300 18px/40px Roboto, sans-serif;
  text-transform: uppercase;
}
.main-nav .last {
  margin-left: 56px;
}
.tools {
  display: flex;
  flex: none;
  gap: 2px;
}
.tools a {
  display: flex;
  align-items: center;
  justify-content: center;
  width: 79px;
  background: #d4dae6;
  color: #006ca9;
}
.tools svg {
  width: 30px;
  height: 30px;
}
.tools svg[fill="none"] {
  fill: none;
}
.account {
  display: flex;
  flex: none;
  align-items: center;
  justify-content: flex-end;
  width: 247px;
  padding: 2px 25px 0 0;
}
.login {
  display: flex;
  gap: 12px;
  width: 186px;
  height: 41px;
  padding: 8px 16px;
  border: 1px solid #fff;
  border-radius: 2px;
  font: 300 18px/22px Roboto, sans-serif;
  white-space: nowrap;
}

.bar {
  display: flex;
  height: 51px;
  margin-top: 2px;
  padding-left: 50px;
  border-bottom: 1px solid #e7e7e7;
  border-radius: 0 0 4px 4px;
  background: #f8f8f8;
  color: #555;
}
.bar a {
  display: flex;
  align-items: center;
  gap: 4px;
  padding: 0 15px;
}
.bar .active {
  background: #e7e7e7;
}
.fa {
  width: 12px;
  height: 14px;
}
.fa.wide {
  width: 18px;
}

.finder {
  padding: 28px 20px 56px;
  text-align: center;
}
.query {
  display: flex;
  max-width: 860px;
  margin: 0 auto 5px;
}
.query input {
  flex: 1;
  min-width: 0;
  height: 45px;
  padding: 10px 16px;
  border: 1px solid #3276b1;
  border-radius: 4px 0 0 4px;
  outline: 0;
  background: #fff;
  box-shadow: 0 0 8px rgba(50, 118, 177, .55);
  font: 18px/24px "Liberation Sans", Arial, sans-serif;
}
.query input::placeholder {
  color: #999;
}
.query button {
  display: flex;
  position: relative;
  align-items: center;
  justify-content: center;
  width: 50px;
  height: 46px;
  padding: 0;
  border: 1px solid #2b699f;
  border-radius: 0 4px 4px 0;
  background: #3276b5;
  color: #fff;
}
.finder p {
  color: #777;
}
.finder strong {
  color: #222;
}

.latest {
  padding: 28px 34px 54px;
  border: 1px solid #e0e0e0;
  border-radius: 4px;
  background: #f4f4f4;
  box-shadow: inset 0 1px 1px rgba(0, 0, 0, .05);
}
h2 {
  margin-bottom: 10px;
  font-size: 18px;
  line-height: 20px;
}
.strip {
  display: flex;
  gap: 15px;
  overflow: hidden;
}
.map {
  display: flex;
  flex: none;
  flex-direction: column;
  align-items: center;
  width: 200px;
  height: 205px;
  padding: 14px;
  border: 1px solid #ddd;
  border-radius: 4px;
  background: #fff;
  font-size: 12px;
  line-height: 14px;
}
.thumb {
  width: 170px;
  height: 108px;
  margin-bottom: 5px;
  border-radius: 4px;
}
.places {
  fill: #888;
  font: 5px "Noto Sans", sans-serif;
}
.caption {
  position: relative;
  width: 100%;
  height: 40px;
  overflow: hidden;
  color: #777;
  font-style: italic;
  text-align: center;
}
.caption::before {
  position: absolute;
  inset: 24px 0 0;
  background: linear-gradient(transparent, #fff);
  content: "";
}
.map a {
  margin-top: 6px;
  color: #3276b1;
}

.browse {
  display: flex;
  margin-top: 20px;
  padding: 39px 35px 35px;
  background: #f4f4f4;
}
.topics {
  width: 75%;
  padding: 0 15px;
}
.resources {
  width: 25%;
  padding: 0 15px;
}
h3 {
  margin-bottom: 23px;
  font-size: 16px;
  line-height: 20px;
}
.topic-grid {
  display: grid;
  grid-template-columns: repeat(3, 1fr);
  margin: 0 -15px 0 15px;
}
.resource-list {
  padding-left: 15px;
}
.cell {
  display: flex;
  height: 55px;
}
.pill {
  display: flex;
  position: relative;
  align-items: center;
  height: 40px;
  max-width: 228px;
  padding-right: 14px;
  border-radius: 20px;
  background: #2b6ea9;
  color: #fff;
  font-size: 13px;
}
.pill.green {
  background: #088600;
}
.round {
  display: flex;
  flex: none;
  align-items: center;
  justify-content: center;
  width: 40px;
  height: 40px;
  margin-right: 8px;
  border-radius: 20px;
  background: #30475c;
}
.green .round {
  background: #225022;
}
.round svg {
  height: 21px;
}
.name {
  overflow: hidden;
  text-overflow: ellipsis;
  white-space: nowrap;
}
.count {
  position: absolute;
  top: -7px;
  left: calc(100% - 16px);
  padding: 0 7px;
  border-radius: 9px;
  background: #333;
  font-size: 12px;
  line-height: 18px;
}

.news {
  padding: 30px 50px 45px;
}
.news-head {
  display: flex;
  justify-content: space-between;
  height: 51px;
  border-bottom: 1px solid #ddd;
}
.tabs {
  display: flex;
  gap: 6px;
}
.tabs button {
  height: 40px;
  padding: 0 15px;
  border: 0;
  border-radius: 4px;
  background: none;
  color: #3276b1;
}
.tabs .on {
  background: #3276b5;
  color: #fff;
}
.views {
  display: flex;
}
.views button {
  display: flex;
  align-items: center;
  justify-content: center;
  width: 39px;
  height: 34px;
  margin-left: -1px;
  padding: 0;
  border: 1px solid #ccc;
  background: #fff;
  color: #333;
}
.views button:first-child {
  border-radius: 4px 0 0 4px;
}
.views button:last-child {
  border-radius: 0 4px 4px 0;
}
.views .on {
  z-index: 1;
  border-color: #adadad;
  background: #e6e6e6;
  box-shadow: inset 0 3px 5px rgba(0, 0, 0, .125);
}
.cards {
  display: grid;
  grid-template-columns: repeat(4, minmax(0, 1fr));
  gap: 58px 20px;
  margin-top: 29px;
}
h4 {
  height: 42px;
  padding: 0 10px;
  overflow: hidden;
  background: #505050;
  color: #fff;
  font-size: 15px;
  line-height: 42px;
  text-overflow: ellipsis;
  white-space: nowrap;
}
.blank {
  display: flex;
  align-items: center;
  justify-content: center;
  height: 150px;
  padding: 0 0 2px 3px;
  border: 1px solid #ccc;
  color: #eee;
}

.foot {
  display: flex;
  align-items: center;
  height: 50px;
  margin-top: 58px;
  border-top: 1px solid #e7e7e7;
  background: #f8f8f8;
  color: #555;
}
.foot > * {
  display: flex;
  align-items: center;
  padding: 0 15px;
}
.powered {
  margin-right: 11px;
}
.foot .fa {
  margin-right: 4px;
}
.share a {
  margin-left: 12px;
}
.share a:first-child {
  margin-left: 8px;
}
.rss {
  margin-left: 7px;
}
</style>
